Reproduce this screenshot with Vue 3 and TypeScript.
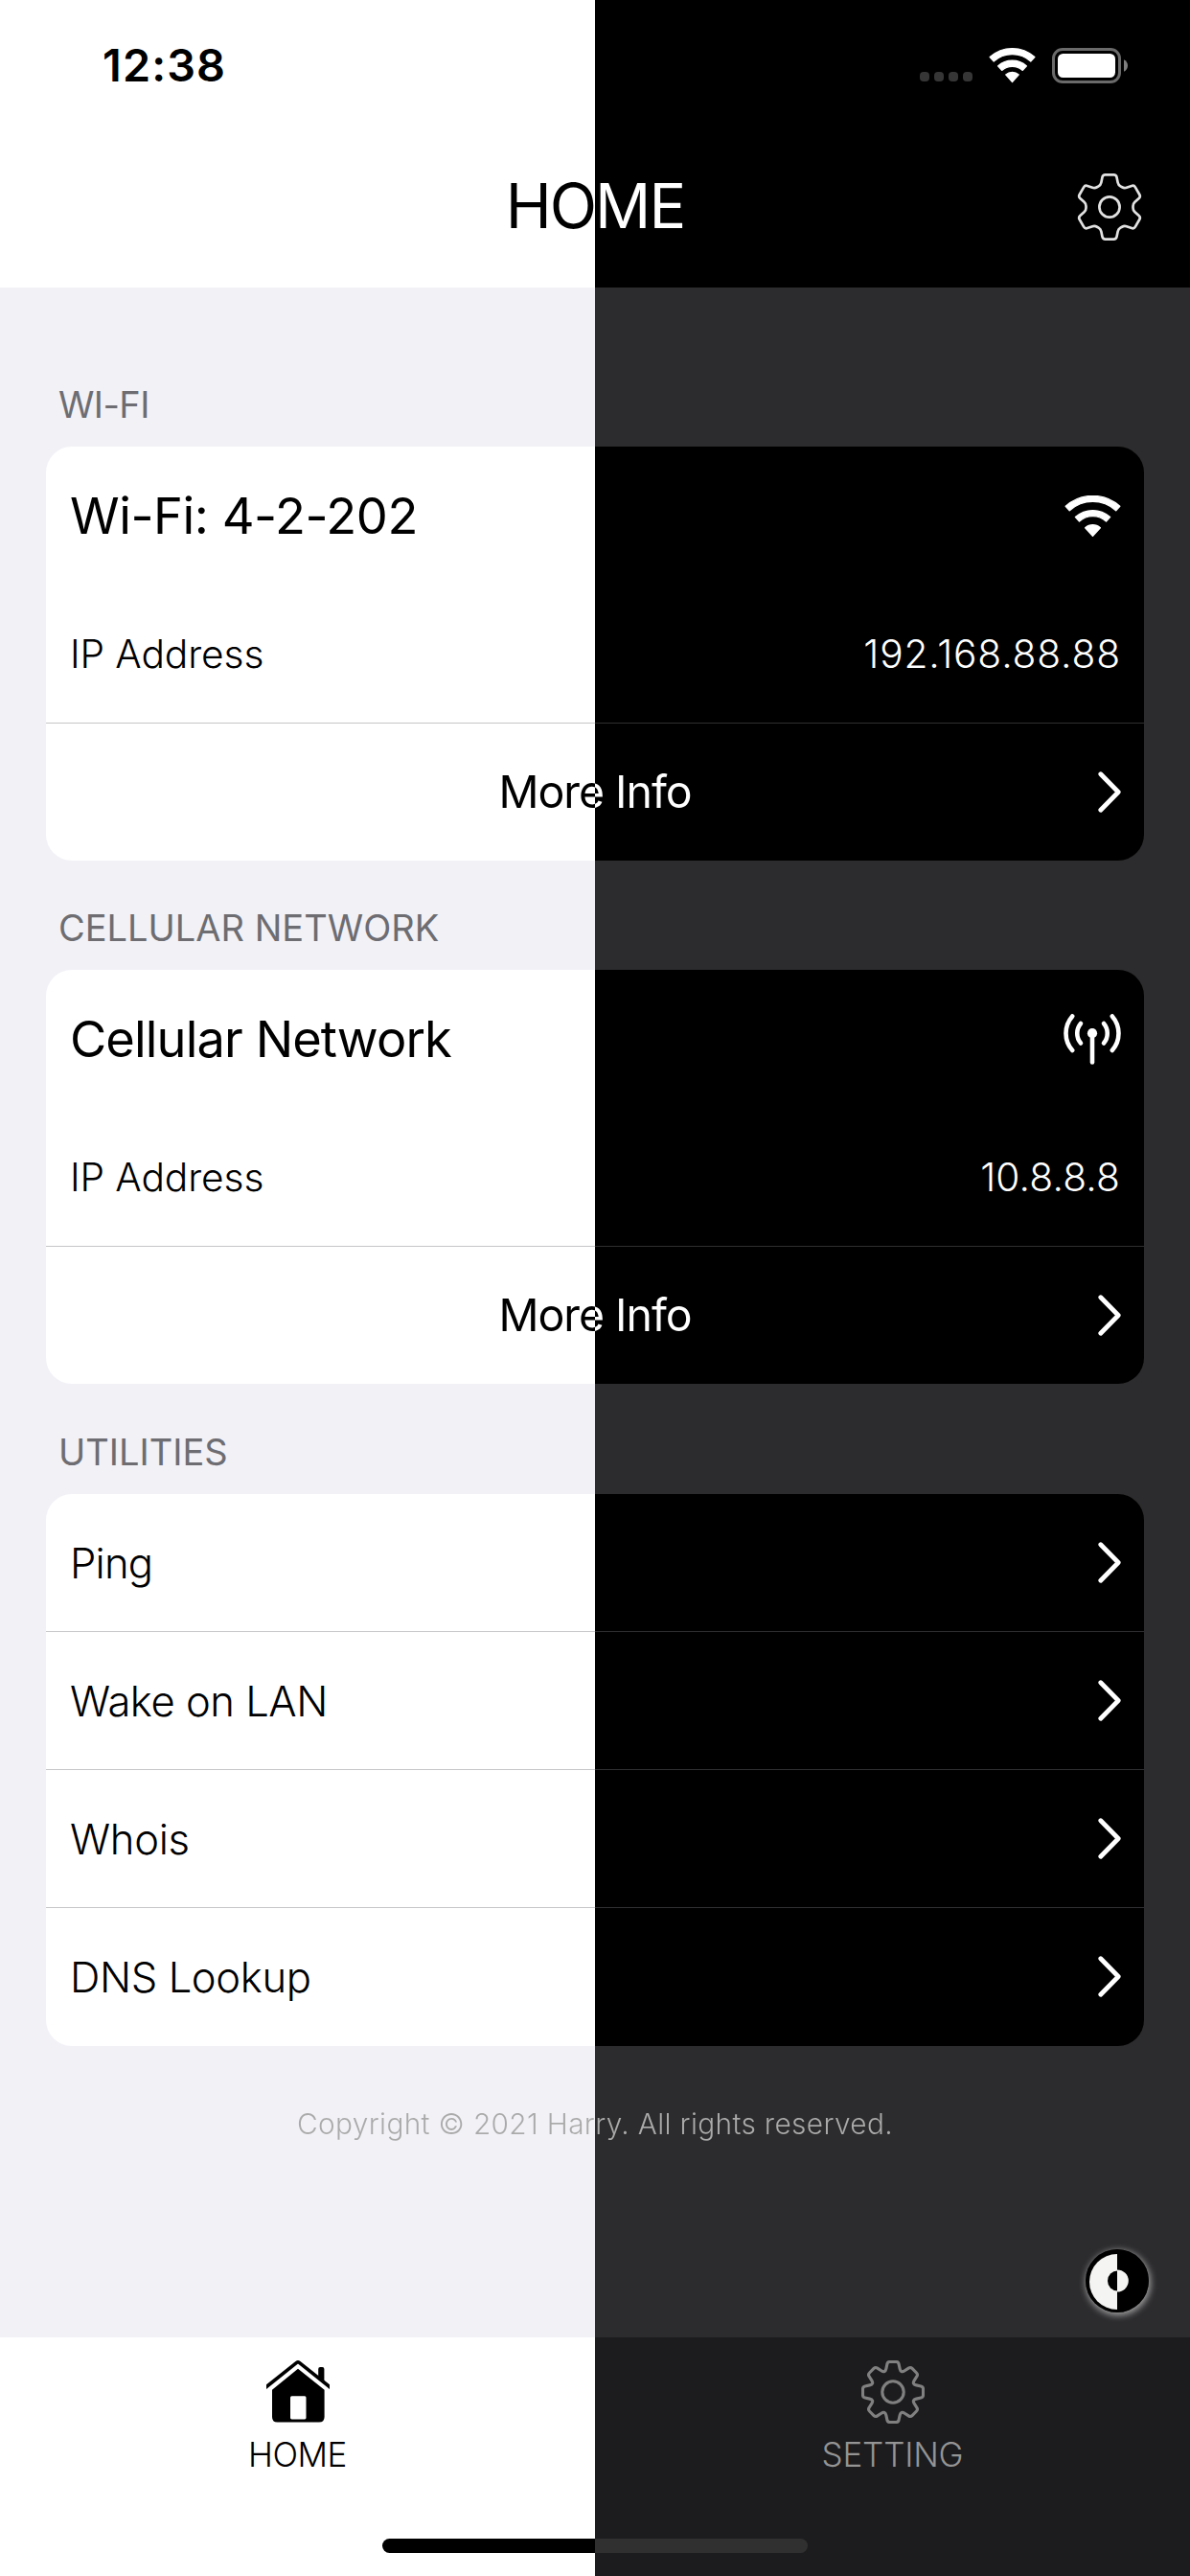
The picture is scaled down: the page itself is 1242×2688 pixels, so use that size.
<script setup lang="ts">
type Point = [number, number]

interface NetworkSection {
  id: string
  label: string
  title: string
  icon: 'wifi' | 'cellular'
  ip: string
}

const networks: NetworkSection[] = [
  { id: 'wifi', label: 'WI-FI', title: 'Wi-Fi: 4-2-202', icon: 'wifi', ip: '192.168.88.88' },
  { id: 'cell', label: 'CELLULAR NETWORK', title: 'Cellular Network', icon: 'cellular', ip: '10.8.8.8' },
]

const utilities = [
  { id: 'ping', name: 'Ping' },
  { id: 'wol', name: 'Wake on LAN' },
  { id: 'whois', name: 'Whois' },
  { id: 'dns', name: 'DNS Lookup' },
]

/** Closed polygon whose corners are softened by quadratic curves. */
function roundedPolygon(points: Point[], radius: number): string {
  const count = points.length
  const toward = (from: Point, to: Point): Point => {
    const dx = to[0] - from[0]
    const dy = to[1] - from[1]
    const len = Math.hypot(dx, dy)
    const d = Math.min(radius, len / 2)
    return [from[0] + (dx / len) * d, from[1] + (dy / len) * d]
  }
  return (
    points
      .map((p, i) => {
        const a = toward(p, points[(i + count - 1) % count])
        const b = toward(p, points[(i + 1) % count])
        return `${i ? 'L' : 'M'}${a[0].toFixed(2)} ${a[1].toFixed(2)}Q${p[0].toFixed(2)} ${p[1].toFixed(2)} ${b[0].toFixed(2)} ${b[1].toFixed(2)}`
      })
      .join('') + 'Z'
  )
}

/** Gear outline around the origin, built from one tooth turned n times. */
function gear(teeth: number, tooth: Point[], radius: number): string {
  const points: Point[] = []
  for (let i = 0; i < teeth; i++) {
    const t = (i * 2 * Math.PI) / teeth
    for (const [x, y] of tooth) {
      points.push([x * Math.cos(t) - y * Math.sin(t), x * Math.sin(t) + y * Math.cos(t)])
    }
  }
  return roundedPolygon(points, radius)
}

/** Upward fan segment between two radii around (cx, cy). */
function fan(cx: number, cy: number, inner: number, outer: number, degrees: number): string {
  const a = (degrees * Math.PI) / 180
  const s = Math.sin(a)
  const c = Math.cos(a)
  const start = `M${cx - outer * s} ${cy - outer * c}A${outer} ${outer} 0 0 1 ${cx + outer * s} ${cy - outer * c}`
  return inner
    ? `${start}L${cx + inner * s} ${cy - inner * c}A${inner} ${inner} 0 0 0 ${cx - inner * s} ${cy - inner * c}Z`
    : `${start}L${cx} ${cy}Z`
}

const headerGear = gear(6, [[-9.2, -23], [-7, -33.6], [7, -33.6], [9.2, -23]], 2.6)
const tabGear = gear(8, [[-7.6, -22], [-5.6, -31.5], [5.6, -31.5], [7.6, -22]], 2.4)

const cardWifi = [fan(29.5, 42.4, 36, 42, 42.3), fan(29.5, 42.4, 20.8, 26.8, 42.3), fan(29.5, 42.4, 0, 11.6, 42.3)].join('')
const statusWifi = [fan(24.5, 35.5, 28.8, 35, 42), fan(24.5, 35.5, 16.2, 22.4, 42), fan(24.5, 35.5, 0, 10.2, 42)].join('')
</script>

<template>
  <div class="screen">
    <header class="top">
      <div class="status">
        <span class="clock">12:38</span>
        <div class="indicators">
          <div class="dots"><i v-for="n in 4" :key="n"></i></div>
          <svg class="status-wifi" width="49" height="36" viewBox="0 0 49 36">
            <path :d="statusWifi" fill="#fff" stroke="#fff" stroke-width="1.2" stroke-linejoin="round" />
          </svg>
          <svg class="battery" width="79" height="37" viewBox="0 0 79 37">
            <rect x="1.5" y="1.5" width="69" height="34" rx="9.5" fill="none" stroke="#6a6a6a" stroke-width="3" />
            <rect x="6" y="6" width="60" height="25" rx="5.5" fill="#fff" />
            <path d="M75 12.2c2.4 1 4 3.5 4 6.3s-1.6 5.3-4 6.3z" fill="#7f7f7f" />
          </svg>
        </div>
      </div>
      <div class="nav">
        <h1 class="nav-title">HOME</h1>
        <svg class="nav-gear" width="68" height="72" viewBox="-34 -36 68 72">
          <g fill="none" stroke="#e2e2e2" stroke-width="2.7" stroke-linejoin="round">
            <path :d="headerGear" />
            <circle r="10.6" />
          </g>
        </svg>
      </div>
    </header>

    <main class="content">
      <section v-for="net in networks" :key="net.id">
        <h2 class="label" :class="'label-' + net.id">{{ net.label }}</h2>
        <div class="card">
          <div class="row">
            <span class="title" :class="'title-' + net.id">{{ net.title }}</span>
            <svg v-if="net.icon === 'wifi'" width="59" height="43" viewBox="0 0 59 43">
              <path :d="cardWifi" fill="#fff" stroke="#fff" stroke-width="1.4" stroke-linejoin="round" />
            </svg>
            <svg v-else width="60" height="53" viewBox="0 0 60 53">
              <g fill="none" stroke="#fff" stroke-width="4.6" stroke-linecap="round">
                <path d="M9.2 2.4A27 27 0 0 0 9.2 38M50.800 2.4A27 27 0 0 1 50.8 38" />
                <path d="M18 10A16 16 0 0 0 18 30.6M42 10A16 16 0 0 1 42 30.6" />
                <path d="M30 20V50.4" />
              </g>
              <circle cx="30" cy="20.2" r="5.1" fill="#fff" />
            </svg>
          </div>
          <div class="row">
            <span class="field">IP Address</span>
            <span class="value" :class="'value-' + net.id">{{ net.ip }}</span>
          </div>
          <div class="row more">
            <span class="more-text">More Info</span>
            <svg class="chevron" width="24" height="43" viewBox="0 0 24 43">
              <path d="M2.8 2.8L21.2 21.5L2.8 40.2" />
            </svg>
          </div>
        </div>
      </section>

      <section>
        <h2 class="label label-util">UTILITIES</h2>
        <div class="card utilities">
          <div v-for="item in utilities" :key="item.id" class="row">
            <span class="utility" :class="'utility-' + item.id">{{ item.name }}</span>
            <svg class="chevron" width="24" height="43" viewBox="0 0 24 43">
              <path d="M2.8 2.8L21.2 21.5L2.8 40.2" />
            </svg>
          </div>
        </div>
      </section>

      <p class="copyright">Copyright © 2021 Harry. All rights reserved.</p>
    </main>

    <div class="theme-toggle">
      <svg width="66" height="66" viewBox="-33 -33 66 66">
        <circle r="33" fill="#000" />
        <path d="M0 -28A28 28 0 0 0 0 30Z" fill="#f4f4f2" />
        <path d="M0.5 -10.5A10.5 10.5 0 0 0 0.5 10.5Z" fill="#000" />
        <path d="M0 -11.5A11.8 11.5 0 0 1 0 11.5Z" fill="#f4f4f2" />
      </svg>
    </div>

    <footer class="tabbar">
      <nav class="tabs">
        <div class="tab">
          <svg width="66" height="66" viewBox="0 0 66 66">
            <path d="M54.2 9Q54.2 7 56.2 7H58.4Q60.4 7 60.4 9V24.5L54.2 19Z" />
            <path d="M-3 30L31.6 2.4Q33 1.4 34.4 2.4L69 30" fill="none" stroke="#000" stroke-width="3.6" />
            <path
              fill-rule="evenodd"
              d="M33 8.7L60.6 30.8V59Q60.6 64.5 55 64.5H11.5Q6 64.5 6 59V30.8ZM26.5 37.3Q25 37.3 25 38.8V60Q25 61.4 26.5 61.4H40Q41.5 61.4 41.5 60V38.8Q41.5 37.3 40 37.3Z"
            />
          </svg>
          <span class="tab-label tab-home">HOME</span>
        </div>
        <div class="tab inactive">
          <svg width="66" height="66" viewBox="-33 -33 66 66">
            <g fill="none" stroke="#808081" stroke-width="3.1" stroke-linejoin="round">
              <path :d="tabGear" />
              <circle r="11.2" />
            </g>
          </svg>
          <span class="tab-label tab-setting">SETTING</span>
        </div>
      </nav>
      <div class="home-indicator"></div>
    </footer>
  </div>
</template>

<style>
body {
  margin: 0;
}
</style>

<style scoped>
.screen {
  position: relative;
  display: flex;
  flex-direction: column;
  width: 1242px;
  height: 2688px;
  overflow: hidden;
  font-family: Inter, 'Liberation Sans', sans-serif;
  font-weight: 400;
  color: #000;
  background: linear-gradient(90deg, #f2f1f6 50%, #2c2c2e 50%);
}

h1,
h2,
p {
  margin: 0;
  font-weight: 400;
}

svg {
  display: block;
  flex: none;
}

span,
h1,
h2,
p {
  white-space: nowrap;
}

.top {
  height: 300px;
  background: linear-gradient(90deg, #fff 50%, #000 50%);
}

.status {
  display: flex;
  align-items: center;
  justify-content: space-between;
  height: 136px;
  padding: 0 65px 0 107px;
}

.clock {
  font-size: 46.8px;
  font-weight: 600;
  letter-spacing: 1.1px;
}

.indicators {
  display: flex;
  align-items: center;
}

.dots {
  display: flex;
  gap: 5px;
  margin: 24px 17px 0 0;
}

.dots i {
  width: 10px;
  height: 10px;
  border-radius: 4px;
  background: #363636;
}

.status-wifi {
  margin-right: 17px;
  overflow: visible;
}

.nav {
  display: grid;
  grid-template-columns: 1fr auto 1fr;
  align-items: center;
  height: 157px;
  padding: 0 50px;
}

.nav-title {
  grid-column: 2;
  font-size: 64.6px;
  letter-spacing: -2px;
  color: transparent;
  background: linear-gradient(90deg, #000 50%, #fff 50%);
  -webkit-background-clip: text;
  background-clip: text;
}

.nav-gear {
  justify-self: end;
  margin-top: 3px;
}

.content {
  display: flex;
  flex-direction: column;
  height: 2139px;
  padding: 52px 48px 0;
  box-sizing: border-box;
}

.label {
  height: 88px;
  padding: 26px 0 0 13px;
  font-size: 38px;
  line-height: 88px;
  color: #6d6d72;
}

.label-wifi {
  letter-spacing: -0.6px;
}

.card {
  border-radius: 27px;
  background: linear-gradient(90deg, #fff 50%, #000 50%);
}

.row {
  display: flex;
  align-items: center;
  justify-content: space-between;
  height: 144px;
  padding: 0 24px 0 25px;
  box-sizing: border-box;
}

.title {
  font-size: 52.4px;
}

.title-wifi {
  letter-spacing: -0.45px;
}

.title-cell {
  letter-spacing: -0.9px;
}

.field,
.value {
  font-size: 40.7px;
  font-weight: 300;
}

.field {
  letter-spacing: -0.1px;
}

.value {
  color: #fff;
}

.value-wifi {
  letter-spacing: 0.85px;
}

.value-cell {
  margin-right: 1px;
  letter-spacing: 0.15px;
}

.more {
  display: grid;
  grid-template-columns: 1fr auto 1fr;
  padding: 0 24px;
  background: linear-gradient(90deg, #c6c6c8 50%, #2f2f31 50%) top / 100% 1px no-repeat;
}

.more-text {
  grid-column: 2;
  font-size: 46.5px;
  letter-spacing: -1.05px;
  color: transparent;
  background: linear-gradient(90deg, #000 50%, #fff 50%);
  -webkit-background-clip: text;
  background-clip: text;
}

.chevron {
  justify-self: end;
  fill: none;
  stroke: #fff;
  stroke-width: 4.8;
  stroke-linecap: round;
  stroke-linejoin: round;
}

.label-util {
  padding-top: 27px;
}

.utilities .row:not(:last-child) {
  background: linear-gradient(90deg, #c6c6c8 50%, #2f2f31 50%) bottom / 100% 1px no-repeat;
}

.utilities .chevron {
  margin-bottom: 1px;
}

.utility {
  font-size: 43.6px;
  font-weight: 300;
}

.utility-ping {
  letter-spacing: -0.8px;
}

.utility-wol {
  letter-spacing: -0.5px;
}

.utility-whois {
  letter-spacing: -0.3px;
}

.utility-dns {
  letter-spacing: -0.4px;
}

.copyright {
  height: 162px;
  font-size: 29.8px;
  font-weight: 300;
  line-height: 162px;
  letter-spacing: 0.35px;
  text-align: center;
  color: transparent;
  background: linear-gradient(90deg, #aaa 50%, #aaa 50%);
  -webkit-background-clip: text;
  background-clip: text;
}

.theme-toggle {
  position: absolute;
  left: 1133px;
  top: 2347px;
  width: 66px;
  height: 66px;
  border-radius: 50%;
  box-shadow: 1px 2px 7px 1px rgba(255, 255, 255, 0.55);
}

.tabbar {
  display: flex;
  flex-direction: column;
  align-items: center;
  height: 249px;
  background: linear-gradient(90deg, #fff 50%, #1c1c1e 50%);
}

.tabs {
  display: flex;
  width: 100%;
  height: 210px;
}

.tab {
  display: flex;
  flex: 1;
  flex-direction: column;
  align-items: center;
  padding-top: 24px;
}

.tab-label {
  font-size: 35px;
  font-weight: 300;
  line-height: 65px;
}

.tab-home {
  letter-spacing: -0.5px;
}

.tab-setting {
  letter-spacing: -0.2px;
}

.inactive {
  color: #949494;
}

.home-indicator {
  width: 444px;
  height: 15px;
  border-radius: 8px;
  background: linear-gradient(90deg, #000 50%, #303030 50%);
}
</style>
